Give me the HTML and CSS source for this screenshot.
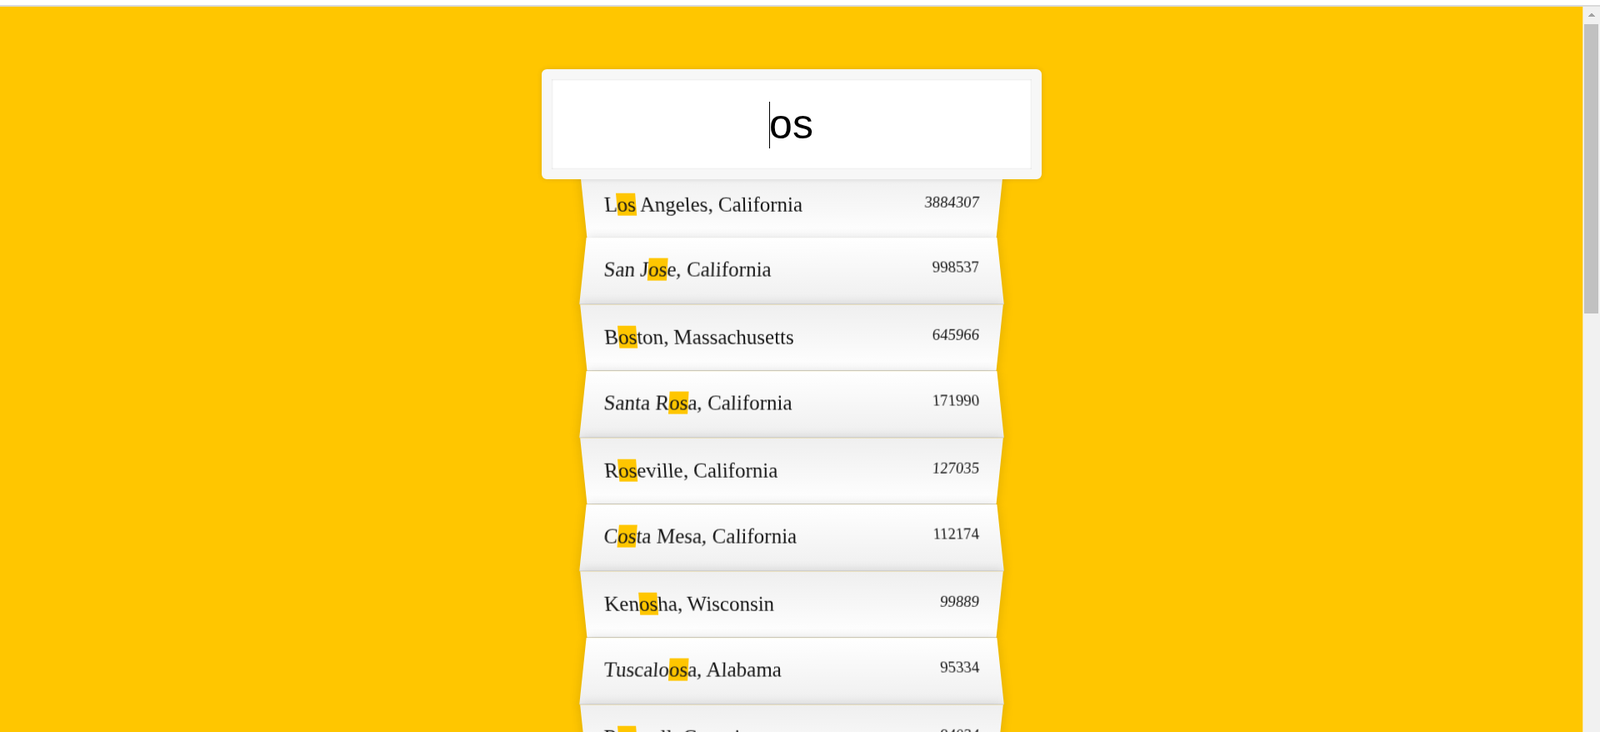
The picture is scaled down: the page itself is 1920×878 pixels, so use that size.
FILE: index.html
```html
<!DOCTYPE html>
<html lang="en">
<head>
<meta charset="UTF-8">
<title>Type Ahead</title>
<link rel="stylesheet" href="styles.css">
</head>
<body>
<div class="chrome-strip"></div>
<div class="frame">
  <div class="viewport">
    <form class="search-form">
      <input type="text" class="search" placeholder="City or State" value="os">
      <span class="caret"></span>
      <ul class="suggestions">
        <li><span class="name">L<span class="hl">os</span> Angeles, California</span><span class="population">3884307</span></li>
        <li><span class="name">San J<span class="hl">os</span>e, California</span><span class="population">998537</span></li>
        <li><span class="name">B<span class="hl">os</span>ton, Massachusetts</span><span class="population">645966</span></li>
        <li><span class="name">Santa R<span class="hl">os</span>a, California</span><span class="population">171990</span></li>
        <li><span class="name">R<span class="hl">os</span>eville, California</span><span class="population">127035</span></li>
        <li><span class="name">C<span class="hl">os</span>ta Mesa, California</span><span class="population">112174</span></li>
        <li><span class="name">Ken<span class="hl">os</span>ha, Wisconsin</span><span class="population">99889</span></li>
        <li><span class="name">Tuscalo<span class="hl">os</span>a, Alabama</span><span class="population">95334</span></li>
        <li><span class="name">R<span class="hl">os</span>well, Georgia</span><span class="population">94034</span></li>
        <li><span class="name"><span class="hl">os</span>hk<span class="hl">os</span>h, Wisconsin</span><span class="population">66778</span></li>
        <li><span class="name">Mount Pr<span class="hl">os</span>pect, Illinois</span><span class="population">54771</span></li>
        <li><span class="name">R<span class="hl">os</span>emead, California</span><span class="population">54561</span></li>
      </ul>
    </form>
  </div>
  <div class="scrollbar">
    <div class="sb-button"></div>
    <div class="sb-thumb"></div>
  </div>
</div>
</body>
</html>
```

FILE: styles.css
```css
html, body {
  margin: 0;
  padding: 0;
  height: 100%;
  overflow: hidden;
  background: #ffffff;
}

*, *:before, *:after {
  box-sizing: border-box;
}

.chrome-strip {
  height: 8px;
  background: #ffffff;
  border-bottom: 2px solid #dadada;
}

.frame {
  display: flex;
  height: calc(100vh - 8px);
}

.viewport {
  flex: 1;
  min-width: 0;
  overflow: hidden;
  background: #ffc600;
  font-family: "Liberation Serif", "Times New Roman", serif;
  font-size: 25px;
  font-weight: 200;
  color: #161616;
}

.scrollbar {
  width: 21px;
  flex: none;
  display: flex;
  flex-direction: column;
  background: #f1f1f1;
  border-left: 1px solid #f9e7a8;
}

.sb-button {
  height: 21px;
  flex: none;
  background-image:
    linear-gradient(to bottom right, transparent 50%, #a3a3a3 50%),
    linear-gradient(to bottom left, transparent 50%, #a3a3a3 50%);
  background-size: 5px 4px, 5px 4px;
  background-position: 4.5px 8px, 9.5px 8px;
  background-repeat: no-repeat;
}

.sb-thumb {
  height: 347px;
  flex: none;
  margin: 0 2px 0 1px;
  background: #c1c1c1;
}

.search-form {
  max-width: 500px;
  margin: 62.5px auto;
  position: relative;
}

input.search {
  width: 120%;
  padding: 25px;
  margin: 0;
  text-align: center;
  outline: 0;
  border: 12.5px solid #f7f7f7;
  left: -10%;
  position: relative;
  top: 12.5px;
  z-index: 2;
  border-radius: 6.25px;
  font-family: "Liberation Sans", Arial, sans-serif;
  font-size: 50px;
  color: #000;
  background: #ffffff;
  box-shadow: 0 0 6.25px rgba(0, 0, 0, 0.12), inset 0 0 2.5px rgba(0, 0, 0, 0.19);
}

.caret {
  position: absolute;
  left: 223.5px;
  top: 51.5px;
  width: 1px;
  height: 56px;
  background: #000;
  z-index: 3;
}

.suggestions {
  margin: 0;
  padding: 0;
  position: relative;
}

.suggestions li {
  background: white;
  list-style: none;
  border-bottom: 1.25px solid #d8d8d8;
  box-shadow: 0 0 12.5px rgba(0, 0, 0, 0.14);
  margin: 0;
  padding: 25px;
  line-height: 28.9px;
  display: flex;
  justify-content: space-between;
  text-transform: capitalize;
}

.suggestions li:nth-child(even) {
  transform: perspective(125px) rotateX(3deg) translateY(2.5px) scale(1.001);
  background: linear-gradient(to bottom, #ffffff 0%, #efefef 100%);
}

.suggestions li:nth-child(odd) {
  transform: perspective(125px) rotateX(-3deg) translateY(3.75px);
  background: linear-gradient(to top, #ffffff 0%, #efefef 100%);
}

.population {
  font-size: 18.75px;
  line-height: 21.6px;
}

.hl {
  background: #ffc600;
}
```
